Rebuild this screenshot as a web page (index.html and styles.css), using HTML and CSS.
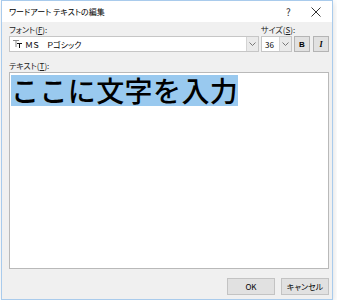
FILE: index.html
```html
<!DOCTYPE html>
<html lang="ja">
<head>
  <meta charset="UTF-8">
  <title>ワードアート テキストの編集</title>
  <link rel="stylesheet" href="styles.css">
</head>
<body>
  <div class="window">
    <!-- Title bar -->
    <div class="titlebar">
      <div class="title">ワードアート テキストの編集</div>
      <div class="help">?</div>
      <div class="close">
        <svg width="10" height="10" viewBox="0 0 10 10">
          <path d="M0.5 0.5 L9.5 9.5 M9.5 0.5 L0.5 9.5" stroke="#333" stroke-width="1" fill="none"/>
        </svg>
      </div>
    </div>

    <!-- Dialog content -->
    <div class="content">
      <div class="label-row">
        <div class="font-label">フォント(<u>F</u>):</div>
        <div class="size-label">サイズ(<u>S</u>):</div>
      </div>
      <div class="field-row">
        <div class="select font-select">
          <div class="select-value">
            <svg class="tt" width="9" height="8" viewBox="0 0 9 8">
              <rect x="0" y="0" width="6" height="1" fill="#8a8a8a"/>
              <rect x="2.5" y="0" width="1" height="7" fill="#8a8a8a"/>
              <rect x="4" y="3" width="5" height="1" fill="#111"/>
              <rect x="6" y="3" width="1" height="5" fill="#111"/>
            </svg>
            <span>ＭＳ　Ｐゴシック</span>
          </div>
          <div class="select-arrow">
            <svg width="7" height="4" viewBox="0 0 7 4"><path d="M0.5 0.5 L3.5 3.5 L6.5 0.5" stroke="#777" fill="none"/></svg>
          </div>
        </div>
        <div class="select size-select">
          <div class="select-value">36</div>
          <div class="select-arrow">
            <svg width="7" height="4" viewBox="0 0 7 4"><path d="M0.5 0.5 L3.5 3.5 L6.5 0.5" stroke="#777" fill="none"/></svg>
          </div>
        </div>
        <div class="tool-btn bold">B</div>
        <div class="tool-btn italic">I</div>
      </div>
      <div class="text-label">テキスト(<u>T</u>):</div>
      <div class="textarea">
        <span class="selected">ここに文字を入力</span>
      </div>
      <div class="button-row">
        <div class="btn">OK</div>
        <div class="btn">キャンセル</div>
      </div>
    </div>
  </div>
</body>
</html>
```

FILE: styles.css
```css
* {
  box-sizing: border-box;
}

html, body {
  margin: 0;
  padding: 0;
  background: #fff;
  font-family: "Noto Sans CJK JP", "Noto Sans", sans-serif;
  font-feature-settings: "palt" 1;
  color: #000;
}

.window {
  margin-left: 1px;
  width: 332px;
  height: 300px;
  border: 1px solid #a9cbec;
  background: #f0f0f0;
  display: flex;
  flex-direction: column;
  box-shadow: 1px 2px 6px rgba(0,0,0,0.12);
}

.titlebar {
  height: 21px;
  background: #fff;
  display: flex;
  align-items: center;
  padding-left: 7px;
  font-size: 8px;
}

.title {
  flex: 1;
}

.help {
  width: 10px;
  margin-right: 15px;
  font-size: 10px;
  color: #333;
}

.close {
  width: 10px;
  margin-right: 11px;
  display: flex;
}

.content {
  flex: 1;
  display: flex;
  flex-direction: column;
  padding: 2px 3px 4px 7px;
  font-size: 8px;
}

.label-row {
  display: flex;
  height: 12px;
  line-height: 12px;
  color: #222;
}

.font-label {
  width: 252px;
}

.field-row {
  display: flex;
  height: 16px;
}

.select {
  display: flex;
  background: #fff;
  border: 1px solid #c6c6c6;
}

.font-select {
  width: 250px;
}

.size-select {
  width: 31px;
  margin-left: 2px;
}

.select-value {
  flex: 1;
  display: flex;
  align-items: center;
  padding-left: 3px;
}

.select-arrow {
  width: 12px;
  background: #eaeaea;
  border-left: 1px solid #d4d4d4;
  display: flex;
  align-items: center;
  justify-content: center;
}

.tt {
  margin-right: 3px;
}

.tool-btn {
  width: 16px;
  height: 16px;
  background: #e1e1e1;
  border: 1px solid #b4b4b4;
  display: flex;
  align-items: center;
  justify-content: center;
  font-family: "Liberation Serif", serif;
  font-size: 8px;
  font-weight: bold;
}

.bold {
  margin-left: 2px;
  font-family: "Liberation Sans", sans-serif;
}

.italic {
  margin-left: 3px;
  font-style: italic;
}

.text-label {
  margin-top: 8px;
  height: 12px;
  line-height: 12px;
  color: #222;
}

.textarea {
  flex: 1;
  background: #fff;
  border: 1px solid #b9b9b9;
  padding: 2px 1px;
}

.selected {
  display: inline-block;
  height: 31px;
  line-height: 31px;
  background: #99c9ef;
  font-size: 28px;
  font-weight: 500;
  font-feature-settings: normal;
  letter-spacing: 0.4px;
}

.button-row {
  margin-top: 9px;
  display: flex;
  justify-content: flex-end;
  gap: 6px;
}

.btn {
  width: 48px;
  height: 17px;
  background: #e1e1e1;
  border: 1px solid #c3c3c3;
  display: flex;
  align-items: center;
  justify-content: center;
  font-size: 8px;
}
```
